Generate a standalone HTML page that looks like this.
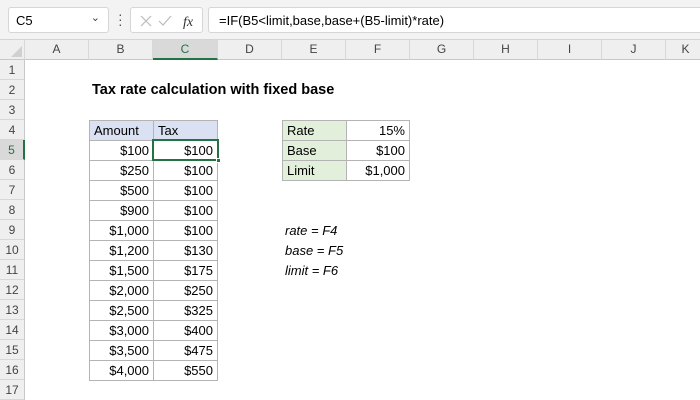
<!DOCTYPE html>
<html><head><style>
*{margin:0;padding:0;box-sizing:border-box}
body{width:700px;height:400px;overflow:hidden;background:#fff;font-family:"Liberation Sans",Arial,sans-serif;position:relative}
.top{position:absolute;left:0;top:0;width:700px;height:40px;background:#f3f3f3;border-bottom:1px solid #d4d4d4}
.nb{position:absolute;left:8px;top:7px;width:101px;height:26px;background:#fff;border:1px solid #d6d6d6;border-radius:3px;font-size:13px;padding:5px 0 0 7px}
.fx{position:absolute;left:130px;top:7px;width:73px;height:26px;background:#fff;border:1px solid #d6d6d6;border-radius:3px}
.fb{position:absolute;left:208px;top:7px;width:500px;height:26px;background:#fff;border:1px solid #d6d6d6;border-radius:3px;font-size:13px;padding:5px 0 0 10px}
.ch{position:absolute;top:40px;height:20px;background:#efefef;border-bottom:1px solid #c8c8c8;border-right:1px solid #d8d8d8;font-size:12px;color:#444;text-align:center;line-height:19px}
.rh{position:absolute;left:0;width:25px;height:20px;background:#efefef;border-right:1px solid #c8c8c8;border-bottom:1px solid #d8d8d8;font-size:12px;color:#444;text-align:center;line-height:20px}
.c{position:absolute;height:21px;border:1px solid #b4b4b4;font-size:13px;line-height:19px;padding:0 4px;background:#fff}
.r{text-align:right}
.t{position:absolute;font-size:13px}
</style></head><body>
<div class="top"></div>
<div class="nb">C5<span style="position:absolute;right:8px;top:3px;font-size:11px;color:#444">&#8964;</span></div>
<div style="position:absolute;left:118px;top:12px;width:3px;height:16px;color:#555;font-size:14px;line-height:5px">·<br>·<br>·</div>
<div class="fx">
<svg width="73" height="26" style="position:absolute;left:0;top:0"><path d="M10 8l10 10M20 8l-10 10" stroke="#bbb" stroke-width="1.2" fill="none"/><path d="M28 13l4 4l8-9" stroke="#bbb" stroke-width="1.2" fill="none"/><text x="52" y="18" font-family="Liberation Serif" font-style="italic" font-size="14" fill="#333">fx</text></svg></div>
<div class="fb">=IF(B5&lt;limit,base,base+(B5-limit)*rate)</div>
<div class="ch" style="left:0;width:25px"><svg width="25" height="20"><path d="M22 6L22 17L11 17Z" fill="#d0d0d0"/></svg></div>
<div class="ch" style="left:25px;width:64px">A</div>
<div class="ch" style="left:89px;width:64px">B</div>
<div class="ch" style="left:153px;width:65px;background:#d9d9d9;border-bottom:2px solid #217346;color:#217346">C</div>
<div class="ch" style="left:218px;width:64px">D</div>
<div class="ch" style="left:282px;width:64px">E</div>
<div class="ch" style="left:346px;width:64px">F</div>
<div class="ch" style="left:410px;width:64px">G</div>
<div class="ch" style="left:474px;width:64px">H</div>
<div class="ch" style="left:538px;width:64px">I</div>
<div class="ch" style="left:602px;width:64px">J</div>
<div class="ch" style="left:666px;width:40px">K</div>
<div class="rh" style="top:60px">1</div><div class="rh" style="top:80px">2</div><div class="rh" style="top:100px">3</div><div class="rh" style="top:120px">4</div>
<div class="rh" style="top:140px;background:#d9d9d9;border-right:2px solid #217346;color:#217346">5</div>
<div class="rh" style="top:160px">6</div><div class="rh" style="top:180px">7</div><div class="rh" style="top:200px">8</div><div class="rh" style="top:220px">9</div><div class="rh" style="top:240px">10</div><div class="rh" style="top:260px">11</div><div class="rh" style="top:280px">12</div><div class="rh" style="top:300px">13</div><div class="rh" style="top:320px">14</div><div class="rh" style="top:340px">15</div><div class="rh" style="top:360px">16</div><div class="rh" style="top:380px">17</div>
<div class="t" style="left:92px;top:82px;font-weight:bold;font-size:14.5px">Tax rate calculation with fixed base</div>
<div class="c" style="left:89px;top:120px;width:65px;background:#d9e1f2">Amount</div>
<div class="c" style="left:153px;top:120px;width:65px;background:#d9e1f2">Tax</div>
<div class="c r" style="left:89px;top:140px;width:65px">$100</div><div class="c r" style="left:153px;top:140px;width:65px">$100</div>
<div class="c r" style="left:89px;top:160px;width:65px">$250</div><div class="c r" style="left:153px;top:160px;width:65px">$100</div>
<div class="c r" style="left:89px;top:180px;width:65px">$500</div><div class="c r" style="left:153px;top:180px;width:65px">$100</div>
<div class="c r" style="left:89px;top:200px;width:65px">$900</div><div class="c r" style="left:153px;top:200px;width:65px">$100</div>
<div class="c r" style="left:89px;top:220px;width:65px">$1,000</div><div class="c r" style="left:153px;top:220px;width:65px">$100</div>
<div class="c r" style="left:89px;top:240px;width:65px">$1,200</div><div class="c r" style="left:153px;top:240px;width:65px">$130</div>
<div class="c r" style="left:89px;top:260px;width:65px">$1,500</div><div class="c r" style="left:153px;top:260px;width:65px">$175</div>
<div class="c r" style="left:89px;top:280px;width:65px">$2,000</div><div class="c r" style="left:153px;top:280px;width:65px">$250</div>
<div class="c r" style="left:89px;top:300px;width:65px">$2,500</div><div class="c r" style="left:153px;top:300px;width:65px">$325</div>
<div class="c r" style="left:89px;top:320px;width:65px">$3,000</div><div class="c r" style="left:153px;top:320px;width:65px">$400</div>
<div class="c r" style="left:89px;top:340px;width:65px">$3,500</div><div class="c r" style="left:153px;top:340px;width:65px">$475</div>
<div class="c r" style="left:89px;top:360px;width:65px">$4,000</div><div class="c r" style="left:153px;top:360px;width:65px">$550</div>
<div style="position:absolute;left:152px;top:139px;width:67px;height:22px;border:2px solid #217346"></div>
<div style="position:absolute;left:216px;top:158px;width:5px;height:5px;background:#217346;border:1px solid #fff"></div>
<div class="c" style="left:282px;top:120px;width:65px;background:#e2efda">Rate</div><div class="c r" style="left:346px;top:120px;width:64px">15%</div>
<div class="c" style="left:282px;top:140px;width:65px;background:#e2efda">Base</div><div class="c r" style="left:346px;top:140px;width:64px">$100</div>
<div class="c" style="left:282px;top:160px;width:65px;background:#e2efda">Limit</div><div class="c r" style="left:346px;top:160px;width:64px">$1,000</div>
<div class="t" style="left:285px;top:223px;font-style:italic">rate = F4</div>
<div class="t" style="left:285px;top:243px;font-style:italic">base = F5</div>
<div class="t" style="left:285px;top:263px;font-style:italic">limit = F6</div>
</body></html>
